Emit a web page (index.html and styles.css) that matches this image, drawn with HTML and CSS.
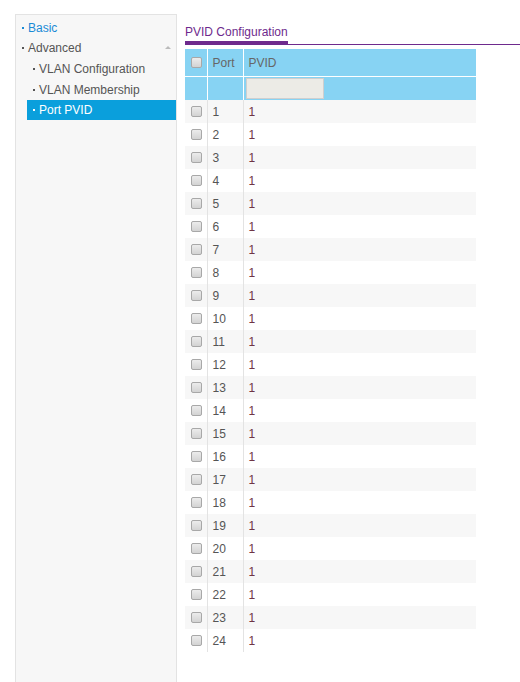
FILE: index.html
```html
<!DOCTYPE html>
<html lang="en">
<head>
  <meta charset="UTF-8">
  <meta name="viewport" content="width=device-width, initial-scale=1.0">
  <title>Port PVID</title>
  <link rel="stylesheet" href="styles.css">
</head>
<body>

  <div class="layout">
    <!-- Side navigation -->
    <ul class="sidenav">
      <li class="nav-item top link"><span class="dot"></span>Basic</li>
      <li class="nav-item top"><span class="dot"></span>Advanced<span class="caret"></span></li>
      <li class="nav-item sub"><span class="dot"></span>VLAN Configuration</li>
      <li class="nav-item sub"><span class="dot"></span>VLAN Membership</li>
      <li class="nav-item sub active"><span class="dot"></span>Port PVID</li>
    </ul>

    <div class="main">
      <div class="tabs">
        <span class="tab">PVID Configuration</span>
      </div>

      <table id="pvidTable">
        <colgroup>
          <col class="c-check">
          <col class="c-port">
          <col>
        </colgroup>
        <thead>
          <tr class="head">
            <th><span class="chk"></span></th>
            <th>Port</th>
            <th>PVID</th>
          </tr>
          <tr class="filter">
            <th></th>
            <th></th>
            <th><input type="text" class="pvid-input"></th>
          </tr>
        </thead>
        <tbody id="pvidBody">
          <!-- Rows are added by the script below -->
        </tbody>
      </table>
    </div>
  </div>

  <script>
    // 24 ports, all on PVID 1
    const body = document.getElementById('pvidBody');
    for (let p = 1; p <= 24; p++) {
      const row = document.createElement('tr');
      row.innerHTML = `
        <td><span class="chk"></span></td>
        <td class="port">${p}</td>
        <td class="pvid">1</td>
      `;
      body.appendChild(row);
    }
  </script>
</body>
</html>
```

FILE: styles.css
```css
body {
  font-family: "Liberation Sans", Arial, sans-serif;
  font-size: 12px;
  margin: 0;
  background-color: #fff;
  color: #555;
}
.layout {
  display: flex;
  align-items: flex-start;
  padding: 14px 0 0 15px;
}
.sidenav {
  list-style: none;
  margin: 0;
  padding: 3px 0 0 0;
  width: 162px;
  height: 680px;
  background-color: #f7f7f7;
  border: 1px solid #e3e3e3;
  box-sizing: border-box;
  flex-shrink: 0;
}
.nav-item {
  position: relative;
  display: flex;
  align-items: center;
  height: 21px;
  color: #555;
}
.nav-item.top {
  height: 20px;
  padding-left: 6px;
}
.nav-item.sub {
  margin-left: 11px;
  padding-left: 6px;
}
.nav-item.link {
  color: #1a8bd6;
}
.nav-item.active {
  background-color: #0a9fdc;
  color: #fff;
  height: 20px;
}
.dot {
  display: inline-block;
  width: 2px;
  height: 2px;
  background-color: currentColor;
  margin-right: 4px;
}
.caret {
  position: absolute;
  right: 5px;
  top: 8px;
  width: 0;
  height: 0;
  border-left: 3px solid transparent;
  border-right: 3px solid transparent;
  border-bottom: 3px solid #bbb;
}
.main {
  flex: 1;
  margin-left: 8px;
}
.tabs {
  border-bottom: 1px solid #6e2a8d;
  height: 30px;
}
.tab {
  display: inline-block;
  color: #6e2a8d;
  font-size: 12px;
  padding-top: 11px;
  height: 16px;
  border-bottom: 3px solid #6e2a8d;
  line-height: 14px;
}
table {
  width: 291px;
  border-collapse: collapse;
  margin-top: 4px;
}
col.c-check {
  width: 22px;
}
col.c-port {
  width: 36px;
}
th, td {
  padding: 0 0 0 5px;
  text-align: left;
  font-weight: normal;
}
th {
  background-color: #87d3f3;
  color: #666;
  border-right: 1px solid #fff;
  border-bottom: 1px solid #fff;
}
th:last-child {
  border-right: none;
}
tr.head th {
  height: 27px;
  font-size: 12px;
}
tr.filter th {
  height: 23px;
  border-bottom: none;
}
td {
  height: 23px;
  border-right: 1px solid #e3e3e3;
}
td:last-child {
  border-right: none;
}
tbody tr:nth-child(odd) td {
  background-color: #f7f7f7;
}
th:first-child, td:first-child {
  padding-left: 6px;
}
td.port {
  color: #555;
}
td.pvid {
  color: #6f3545;
}
.chk {
  display: block;
  width: 9px;
  height: 9px;
  border: 1px solid #a8a8a8;
  border-radius: 2px;
  background: linear-gradient(#ececec, #d3d3d3);
}
.pvid-input {
  display: block;
  width: 78px;
  height: 21px;
  box-sizing: border-box;
  margin-left: -3px;
  border: 1px solid #cfcfcf;
  background-color: #ecebe6;
  padding: 0 4px;
  font-family: "Liberation Sans", Arial, sans-serif;
  font-size: 12px;
}
```
